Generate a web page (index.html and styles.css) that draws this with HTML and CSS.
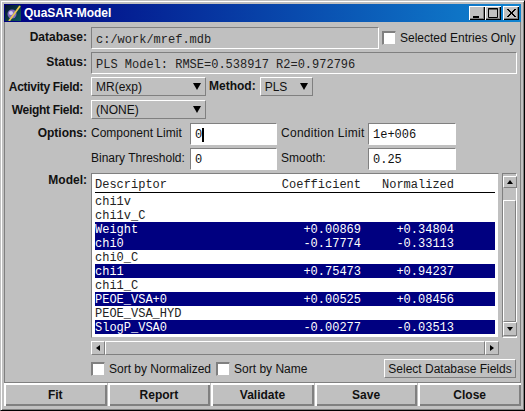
FILE: index.html

```html
<!DOCTYPE html>
<html>
<head>
 <title>QuaSAR-Model</title>
<link rel="stylesheet" href="styles.css">
</head>

<body>
<div class="window">
  <div class="titlebar">
    <svg class="appicon" width="16" height="16" viewBox="0 0 16 16">
      <defs><linearGradient id="ibg" x1="0" y1="0" x2="1" y2="1"><stop offset="0" stop-color="#04102c"/><stop offset="1" stop-color="#0e5a5a"/></linearGradient></defs>
      <rect width="16" height="16" fill="url(#ibg)"/>
      <circle cx="7" cy="9" r="4.5" fill="#8068c0"/>
      <circle cx="6" cy="8" r="2" fill="#d8d0f0"/>
      <path d="M4 16 L15 1" stroke="#e8c850" stroke-width="1.8"/>
    </svg>
    <span class="title">QuaSAR-Model</span>
    <span class="capbtn"><svg width="16" height="14" viewBox="0 0 16 14"><rect x="4" y="10" width="6" height="2" fill="#000"/></svg></span>
    <span class="capbtn"><svg width="16" height="14" viewBox="0 0 16 14"><path d="M3.5 2.5h9v9h-9z M3 3h10" fill="none" stroke="#000"/></svg></span>
    <span class="capbtn closebtn"><svg width="16" height="14" viewBox="0 0 16 14"><path d="M4 3l8 8M5 3l8 8M12 3l-8 8M13 3l-8 8" fill="none" stroke="#000"/></svg></span>
  </div>

  <div class="form">
    <label class="lab lab-top">Database:</label>
    <div class="row r-db">
      <div class="field mono">c:/work/mref.mdb</div>
      <span class="check"></span>
      <span class="cap">Selected Entries Only</span>
    </div>

    <label class="lab lab-top">Status:</label>
    <div class="row r-status">
      <div class="field mono grow">PLS Model: RMSE=0.538917 R2=0.972796</div>
    </div>

    <label class="lab lab-field">Activity Field:</label>
    <div class="row r-sel">
      <div class="select sel-wide"><span>MR(exp)</span><i class="arrow"></i></div>
      <label class="lab lab-method">Method:</label>
      <div class="select sel-small"><span>PLS</span><i class="arrow"></i></div>
    </div>

    <label class="lab lab-field">Weight Field:</label>
    <div class="row r-sel">
      <div class="select sel-wide"><span>(NONE)</span><i class="arrow"></i></div>
    </div>

    <label class="lab lab-top">Options:</label>
    <div class="opts">
      <span class="cap">Component Limit</span>
      <div class="input mono">0<b class="caret"></b></div>
      <span class="cap cap2 wide">Condition Limit</span>
      <div class="input mono">1e+006</div>
      <span class="cap">Binary Threshold:</span>
      <div class="input mono">0</div>
      <span class="cap cap2">Smooth:</span>
      <div class="input mono">0.25</div>
    </div>

    <label class="lab lab-model">Model:</label>
    <div class="model">
      <div class="list mono">
        <div class="lrow lhead"><span>Descriptor</span><span>Coefficient</span><span>Normalized</span></div>
        <div class="lrow"><span>chi1v</span><span></span><span></span></div>
        <div class="lrow"><span>chi1v_C</span><span></span><span></span></div>
        <div class="lrow sel"><span>Weight</span><span>+0.00869</span><span>+0.34804</span></div>
        <div class="lrow sel"><span>chi0</span><span>-0.17774</span><span>-0.33113</span></div>
        <div class="lrow"><span>chi0_C</span><span></span><span></span></div>
        <div class="lrow sel"><span>chi1</span><span>+0.75473</span><span>+0.94237</span></div>
        <div class="lrow"><span>chi1_C</span><span></span><span></span></div>
        <div class="lrow sel"><span>PEOE_VSA+0</span><span>+0.00525</span><span>+0.08456</span></div>
        <div class="lrow"><span>PEOE_VSA_HYD</span><span></span><span></span></div>
        <div class="lrow sel"><span>SlogP_VSA0</span><span>-0.00277</span><span>-0.03513</span></div>
      </div>
      <div class="vscroll">
        <span class="sbtn vbtn-up"><i class="tri up"></i></span>
        <span class="gap"></span>
        <span class="strack"></span>
        <span class="sbtn vbtn-down"><i class="tri down"></i></span>
      </div>
      <div class="hscroll">
        <span class="sbtn"><i class="tri left"></i></span>
        <span class="strack"></span>
        <span class="sbtn"><i class="tri right"></i></span>
      </div>
    </div>

    <div class="sorts">
      <span class="check"></span>
      <span class="cap">Sort by Normalized</span>
      <span class="check"></span>
      <span class="cap">Sort by Name</span>
      <button class="selbtn">Select Database Fields</button>
    </div>
  </div>

  <div class="actions">
    <button class="act">Fit</button>
    <button class="act">Report</button>
    <button class="act">Validate</button>
    <button class="act">Save</button>
    <button class="act">Close</button>
  </div>
</div>
</body>
</html>
```

FILE: styles.css

```css
html, body { margin: 0; padding: 0; }
body { width: 525px; height: 411px; background: #c0c0c0; font-family: "Liberation Sans", Arial, sans-serif; font-size: 12px; color: #111; overflow: hidden; }

.window { box-sizing: border-box; width: 525px; height: 411px; background: #c0c0c0; display: flex; flex-direction: column;
  border: 1px solid; border-color: #c0c0c0 #000 #000 #c0c0c0; box-shadow: inset 1px 1px 0 #fff, inset -1px -1px 0 #808080; padding: 3px; }

.titlebar { height: 18px; flex: none; display: flex; align-items: center; padding-right: 2px; background: linear-gradient(to right, #000080, #1084d0); color: #fff; }
.appicon { margin: 0 3px 0 1px; flex: none; }
.title { flex: 1; font-weight: bold; font-size: 12px; }
.capbtn { width: 16px; height: 14px; background: #c0c0c0; box-shadow: inset 1px 1px 0 #fff, inset -1px -1px 0 #000, inset -2px -2px 0 #808080; display: block; }
.capbtn svg { display: block; }
.closebtn { margin-left: 2px; }

.form { flex: none; display: grid; grid-template-columns: 82px 426px; column-gap: 4px; align-content: start; padding-top: 5px; box-sizing: border-box; height: 361px; border-left: 1px solid #808080; border-right: 1px solid #808080; border-bottom: 1px solid #808080; }

.lab { font-weight: bold; text-align: right; line-height: 20px; white-space: nowrap; }
.lab-field { margin-right: 4px; line-height: 20px; letter-spacing: -.3px; }
.lab-model { line-height: 21px; }
.cap { white-space: nowrap; }
.mono { font-family: "Liberation Mono", "Courier New", monospace; }

.row { display: flex; align-items: center; }
.r-db, .r-status { height: 22px; margin-bottom: 3px; }
.r-sel { height: 19px; margin-bottom: 4px; }
.grow { flex: 1; }
.field { box-sizing: border-box; height: 22px; line-height: 22px; padding: 1px 0 0 4px; border: 1px solid; border-color: #808080 #fff #fff #808080; color: #222; }
.r-db .field { flex: none; width: 288px; margin-right: 3px; }
.r-db .cap { margin-left: 4px; }

.check { box-sizing: border-box; width: 14px; height: 14px; flex: none; background: #fff; border: 1px solid; border-color: #808080 #c0c0c0 #c0c0c0 #808080; box-shadow: inset 1px 1px 0 #808080; }

.select { box-sizing: border-box; height: 19px; display: flex; align-items: center; justify-content: space-between; padding: 0 4px 0 4px; background: #c0c0c0; border: 1px solid; border-color: #fff #808080 #808080 #fff; }
.sel-wide { width: 115px; }
.sel-small { width: 53px; }
.arrow { width: 0; height: 0; border-left: 4px solid transparent; border-right: 4px solid transparent; border-top: 7px solid #000; }
.lab-method { margin: 0 4px 0 3px; line-height: 19px; }

.opts { display: grid; grid-template-columns: 99px 87px 91px 88px; grid-auto-rows: 22px; row-gap: 3px; align-items: center; }
.opts .cap { margin-top: -2px; }
.cap2 { padding-left: 4px; }
.wide { letter-spacing: .28px; }
.input { box-sizing: border-box; height: 22px; padding: 1px 0 0 4px; background: #fff; border: 1px solid; border-color: #808080 #fff #fff #808080; display: flex; align-items: center; }
.caret { width: 2px; height: 14px; background: #000; }

.model { display: grid; grid-template-columns: 408px 15px; grid-template-rows: 165px 14px; gap: 3px; margin-top: 3px; }
.list { box-sizing: border-box; background: #fff; padding: 3px 3px 0; border: 1px solid; border-color: #808080 #c0c0c0 #c0c0c0 #808080; color: #222; }
.lrow { display: grid; grid-template-columns: 186px 80px 93px 41px; height: 14px; line-height: 16px; white-space: nowrap; }
.lrow span { display: block; }
.lrow span:nth-child(2), .lrow span:nth-child(3) { text-align: right; }
.lhead { box-sizing: border-box; height: 16px; border-bottom: 1px solid #000; line-height: 17px; margin-bottom: 1px; }
.sel { background: #000080; color: #fff; }

.vscroll { box-sizing: border-box; display: flex; flex-direction: column; padding: 1px 0; border: 1px solid; border-color: #808080 #fff #fff #808080; }
.hscroll { display: flex; grid-column: 1; }
.sbtn { box-sizing: border-box; width: 14px; height: 14px; flex: none; display: flex; align-items: center; justify-content: center; background: #c0c0c0; border: 1px solid; border-color: #fff #808080 #808080 #fff; }
.vbtn-up { height: 12px; margin-top: 1px; }
.gap { height: 12px; flex: none; }
.strack { flex: 1; background: #c0c0c0; border: 1px solid; border-color: #fff #808080 #808080 #fff; box-sizing: border-box; }
.tri { width: 0; height: 0; display: block; border-style: solid; border-color: transparent; }
.up { border-width: 0 3px 4px; border-bottom-color: #000; }
.down { border-width: 4px 3px 0; border-top-color: #000; }
.left { border-width: 3px 4px 3px 0; border-right-color: #000; }
.right { border-width: 3px 0 3px 4px; border-left-color: #000; }

.sorts { grid-column: 2; display: flex; align-items: center; height: 19px; margin-top: 4px; }
.sorts .cap { margin-left: 4px; margin-right: 5px; }
.selbtn { margin-left: auto; margin-right: 1px; box-sizing: border-box; width: 132px; height: 19px; padding: 0; background: #c0c0c0; border: 1px solid; border-color: #fff #808080 #808080 #fff; font: 12px "Liberation Sans", Arial, sans-serif; color: #111; }

.actions { flex: none; display: grid; grid-template-columns: repeat(5, 1fr); column-gap: 1px; height: 23px; }
.act { box-sizing: border-box; height: 23px; padding: 0; background: #c0c0c0; border: 0; box-shadow: inset 2px 2px 0 #fff, inset -2px -2px 0 #808080; font: bold 12px "Liberation Sans", Arial, sans-serif; color: #111; }
```
